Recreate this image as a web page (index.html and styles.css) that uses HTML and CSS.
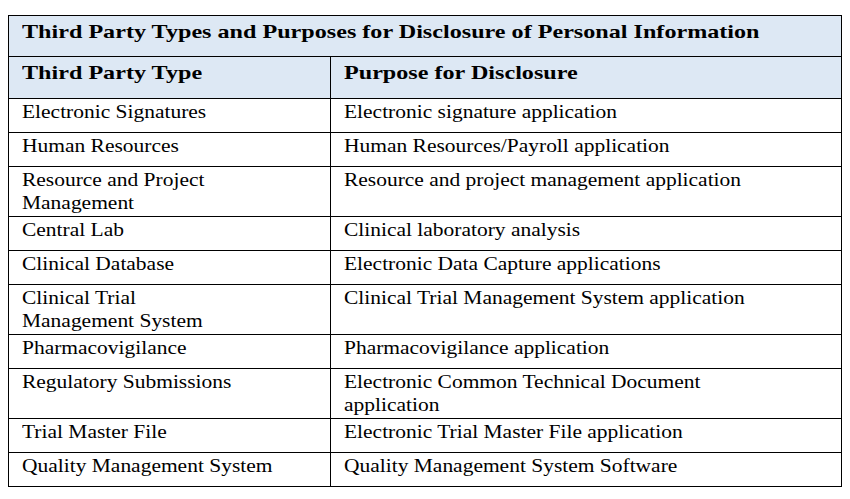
FILE: index.html
```html
<!DOCTYPE html>
<html lang="en">
<head>
<meta charset="utf-8">
<title>Third Party Types and Purposes for Disclosure of Personal Information</title>
<link rel="stylesheet" href="styles.css">
</head>
<body>
<table class="tbl">
  <colgroup><col class="c1"><col class="c2"></colgroup>
  <tr class="title">
    <th colspan="2"><span class="b">Third Party Types and Purposes for Disclosure of Personal Information</span></th>
  </tr>
  <tr class="head">
    <th><span class="b">Third Party Type</span></th>
    <th><span class="b">Purpose for Disclosure</span></th>
  </tr>
  <tr class="r1">
    <td><span class="t">Electronic Signatures</span></td>
    <td><span class="t">Electronic signature application</span></td>
  </tr>
  <tr class="r1">
    <td><span class="t">Human Resources</span></td>
    <td><span class="t">Human Resources/Payroll application</span></td>
  </tr>
  <tr class="r2">
    <td><span class="t">Resource and Project<br>Management</span></td>
    <td><span class="t">Resource and project management application</span></td>
  </tr>
  <tr class="r1">
    <td><span class="t">Central Lab</span></td>
    <td><span class="t">Clinical laboratory analysis</span></td>
  </tr>
  <tr class="r1">
    <td><span class="t">Clinical Database</span></td>
    <td><span class="t">Electronic Data Capture applications</span></td>
  </tr>
  <tr class="r2">
    <td><span class="t">Clinical Trial<br>Management System</span></td>
    <td><span class="t">Clinical Trial Management System application</span></td>
  </tr>
  <tr class="r1">
    <td><span class="t">Pharmacovigilance</span></td>
    <td><span class="t">Pharmacovigilance application</span></td>
  </tr>
  <tr class="r2">
    <td><span class="t">Regulatory Submissions</span></td>
    <td><span class="t">Electronic Common Technical Document<br>application</span></td>
  </tr>
  <tr class="r1">
    <td><span class="t">Trial Master File</span></td>
    <td><span class="t">Electronic Trial Master File application</span></td>
  </tr>
  <tr class="r1">
    <td><span class="t">Quality Management System</span></td>
    <td><span class="t">Quality Management System Software</span></td>
  </tr>
</table>
</body>
</html>
```

FILE: styles.css
```css
html, body {
  background: #ffffff;
}

body {
  margin: 15px 8px 0 8px;
  font-family: "Liberation Serif", serif;
  color: #000000;
}

.tbl {
  border-collapse: collapse;
  table-layout: fixed;
  width: 833px;
}

.c1 { width: 322px; }
.c2 { width: 511px; }

.tbl th,
.tbl td {
  border: 1px solid #000000;
  text-align: left;
  vertical-align: top;
  padding: 1px 13px 0 13px;
  font-size: 19px;
  line-height: 23.3px;
}

.tbl th {
  background: #dde8f4;
  padding-top: 3.5px;
}

.title { height: 41px; }
.head { height: 42px; }
.r1 { height: 34px; }
.r2 { height: 50px; }

.t {
  display: block;
  width: fit-content;
  white-space: nowrap;
  font-weight: 400;
  transform: scaleX(1.13);
  transform-origin: 0 0;
}

.b {
  display: block;
  width: fit-content;
  white-space: nowrap;
  font-weight: 700;
  transform: scaleX(1.27);
  transform-origin: 0 0;
}
```
